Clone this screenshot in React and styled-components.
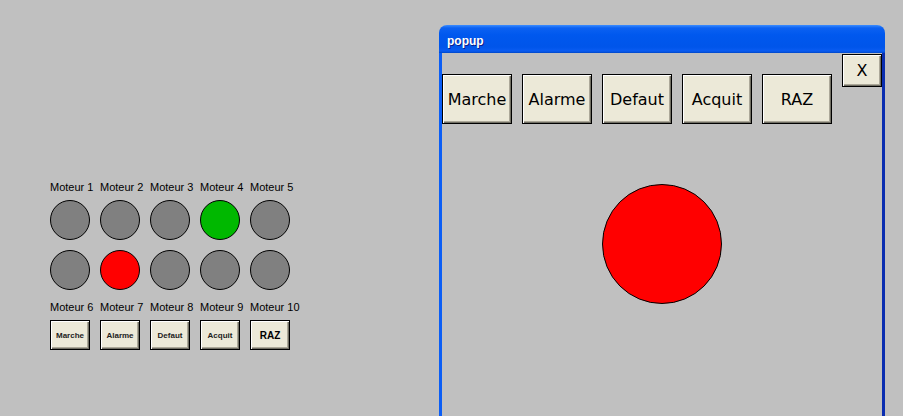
import React from "react";
import styled, { createGlobalStyle } from "styled-components";

const GlobalStyle = createGlobalStyle`
  html, body {
    margin: 0;
    padding: 0;
    background: #c0c0c0;
    overflow: hidden;
    font-family: "Liberation Sans", Arial, sans-serif;
  }
`;

const Page = styled.div`
  display: flex;
  align-items: flex-start;
  padding: 25px 0 0 50px;
  height: 416px;
  box-sizing: border-box;
`;

const Panel = styled.div`
  display: flex;
  flex-direction: column;
  margin-top: 156px;
  width: 250px;
`;

const Row = styled.div`
  display: grid;
  grid-template-columns: repeat(5, 50px);
  margin-top: ${(p) => p.$gap || 0}px;
`;

const Label = styled.div`
  font-size: 11px;
  line-height: 13px;
  color: #000;
  white-space: nowrap;
`;

const Lamp = styled.div`
  box-sizing: border-box;
  width: ${(p) => p.$size}px;
  height: ${(p) => p.$size}px;
  border-radius: 50%;
  border: 1px solid #000;
  background: ${(p) => p.$color};
`;

const bevel = `
  box-sizing: border-box;
  border: 1px solid #000;
  background: #ece9d8;
  box-shadow: inset 1px 1px #fff, inset -1px -1px #716f64, inset -2px -2px #aca899;
  display: flex;
  align-items: center;
  justify-content: center;
  padding: 0;
  cursor: default;
`;

const SmallButton = styled.button`
  ${bevel}
  width: 40px;
  height: 30px;
  font-family: "Liberation Sans", Arial, sans-serif;
  font-weight: bold;
  font-size: ${(p) => (p.$big ? 10 : 8)}px;
  color: ${(p) => (p.$big ? "#000" : "#222")};
`;

const Window = styled.div`
  margin-left: 139px;
  width: 446px;
  height: 400px;
  display: flex;
  flex-direction: column;
`;

const TitleBar = styled.div`
  height: 28px;
  border-radius: 8px 8px 0 0;
  background: linear-gradient(
    #3b8cff 0px,
    #0b61f2 3px,
    #0058ee 10px,
    #0055ea 22px,
    #0a5cf2 26px,
    #0047c8 28px
  );
  display: flex;
  align-items: center;
  padding: 3px 0 0 8px;
  box-sizing: border-box;
`;

const Title = styled.span`
  color: #fff;
  font-weight: bold;
  font-size: 12px;
  text-shadow: 1px 1px #0a1e8c;
`;

const Body = styled.div`
  flex: 1;
  background: #c0c0c0;
  border-left: 3px solid #0b5ef5;
  border-right: 3px solid #0a2db0;
  display: flex;
  flex-direction: column;
  align-items: center;
`;

const Toolbar = styled.div`
  align-self: stretch;
  display: flex;
  align-items: flex-start;
  padding-top: 1px;
`;

const ButtonGroup = styled.div`
  display: flex;
  gap: 10px;
  margin-top: 20px;
`;

const PopupButton = styled.button`
  ${bevel}
  width: 70px;
  height: 50px;
  font-family: "DejaVu Sans", Verdana, sans-serif;
  font-size: 16px;
  color: #000;
`;

const CloseButton = styled.button`
  ${bevel}
  margin-left: auto;
  width: 40px;
  height: 33px;
  font-family: "DejaVu Sans", Verdana, sans-serif;
  font-size: 16px;
  color: #000;
`;

const BigLampWrap = styled.div`
  margin-top: 60px;
`;

const GRAY = "#808080";
const row1 = [GRAY, GRAY, GRAY, "#00b800", GRAY];
const row2 = [GRAY, "#ff0000", GRAY, GRAY, GRAY];
const actions = ["Marche", "Alarme", "Defaut", "Acquit", "RAZ"];

export default function App() {
  return (
    <>
      <GlobalStyle />
      <Page>
        <Panel>
          <Row>
            {[1, 2, 3, 4, 5].map((n) => (
              <Label key={n}>Moteur {n}</Label>
            ))}
          </Row>
          <Row $gap={6}>
            {row1.map((c, i) => (
              <Lamp key={i} $size={40} $color={c} />
            ))}
          </Row>
          <Row $gap={10}>
            {row2.map((c, i) => (
              <Lamp key={i} $size={40} $color={c} />
            ))}
          </Row>
          <Row $gap={11}>
            {[6, 7, 8, 9, 10].map((n) => (
              <Label key={n}>Moteur {n}</Label>
            ))}
          </Row>
          <Row $gap={6}>
            {actions.map((a) => (
              <SmallButton key={a} $big={a === "RAZ"}>
                {a}
              </SmallButton>
            ))}
          </Row>
        </Panel>
        <Window>
          <TitleBar>
            <Title>popup</Title>
          </TitleBar>
          <Body>
            <Toolbar>
              <ButtonGroup>
                {actions.map((a) => (
                  <PopupButton key={a}>{a}</PopupButton>
                ))}
              </ButtonGroup>
              <CloseButton>X</CloseButton>
            </Toolbar>
            <BigLampWrap>
              <Lamp $size={120} $color="#ff0000" />
            </BigLampWrap>
          </Body>
        </Window>
      </Page>
    </>
  );
}
